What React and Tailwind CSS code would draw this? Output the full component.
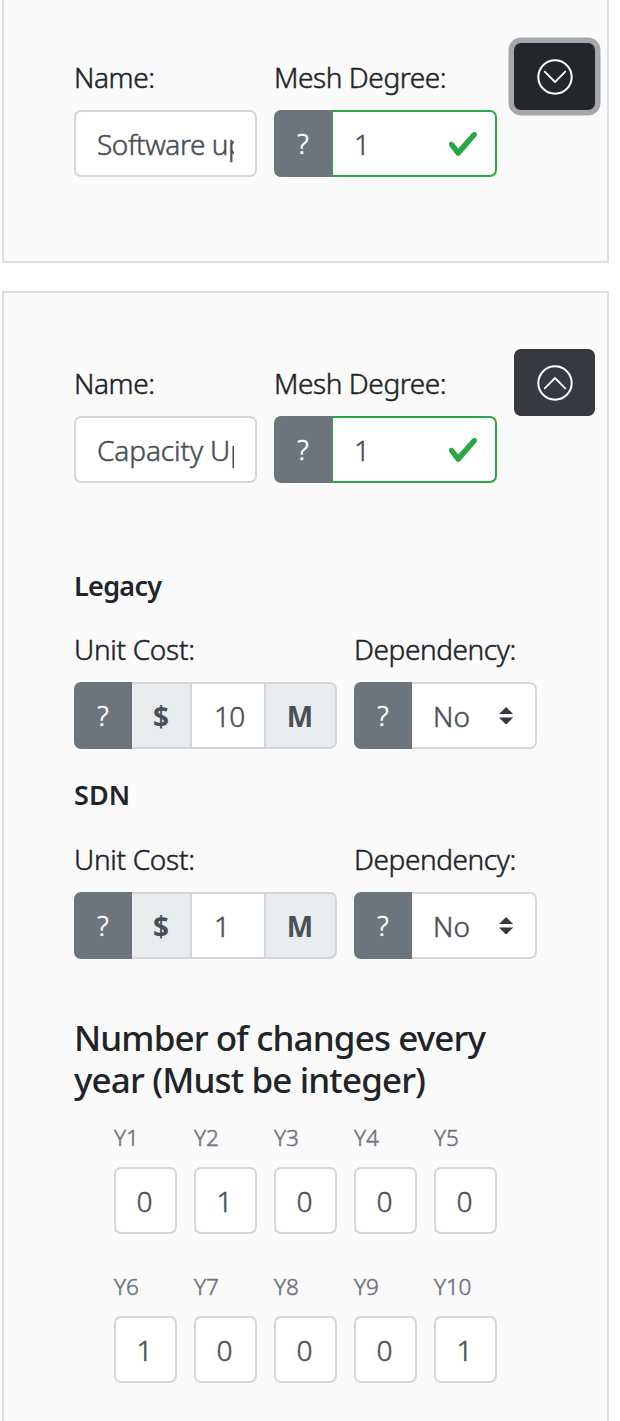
import React from "react";

function CircleChevron({ up }) {
  return (
    <svg width="36" height="36" viewBox="0 0 36 36" fill="none" stroke="#fff" strokeLinejoin="round" strokeLinecap="round" className="block shrink-0">
      <circle cx="18" cy="18" r="16.7" strokeWidth="2" />
      <path d={up ? "M7.7 23.4 18 13 28.3 23.4" : "M7.7 12.6 18 23 28.3 12.6"} strokeWidth="1.8" />
    </svg>
  );
}

function Toggle({ up, focused }) {
  return (
    <button
      className={
        "flex h-[67px] w-[81px] shrink-0 items-center justify-center rounded-[7px] pt-px " +
        (up ? "bg-[#343a40]" : "bg-[#23272b]") +
        (focused ? " shadow-[0_0_0_5.5px_#a5a8ab]" : "")
      }
    >
      <CircleChevron up={up} />
    </button>
  );
}

function Label({ children, className = "" }) {
  return <div className={"h-[42px] whitespace-nowrap text-[28px] leading-[42px] text-[#212529] " + className}>{children}</div>;
}

function Help() {
  return (
    <div className="flex h-[67px] w-[58px] shrink-0 items-center justify-center rounded-l-[7px] bg-[#6c757d] pt-px text-[27px] leading-[42px] text-white [-webkit-text-stroke:0.6px]">
      ?
    </div>
  );
}

function Panel({ name, nameClass, up, focused, className, children }) {
  return (
    <section className={"w-[607px] border-2 border-[#dddee0] bg-[#fafafa] " + className}>
      <div className="flex">
        <div className="w-[200px] pt-[13px]">
          <Label className="tracking-[-0.42px]">Name:</Label>
          <div className="mt-3 h-[67px] w-[183px] rounded-[7px] border-2 border-[#d2d7dc] bg-white px-[21px] pt-[11px]">
            <div className={"overflow-hidden whitespace-nowrap text-[28px] leading-[42px] text-[#495057] " + nameClass}>{name}</div>
          </div>
        </div>
        <div className="w-[240px] pt-[13px]">
          <Label className="tracking-[-0.42px]">Mesh Degree:</Label>
          <div className="mt-3 flex">
            <Help />
            <div className="flex h-[67px] w-[165px] items-center justify-between rounded-r-[7px] border-2 border-l-[1px] border-[#28a745] bg-white pr-4 pl-[21px]">
              <span className="pt-px text-[28px] leading-[42px] text-[#495057]">1</span>
              <svg width="32" height="32" viewBox="0 0 8 8" className="block">
                <path fill="#28a745" d="M2.3 6.73L.6 4.53c-.4-1.04.46-1.4 1.1-.8l1.1 1.4 3.4-3.8c.6-.63 1.6-.27 1.2.7l-4 4.6c-.43.5-.8.4-1.1.1z" />
              </svg>
            </div>
          </div>
        </div>
        <Toggle up={up} focused={focused} />
      </div>
      {children}
    </section>
  );
}

function CostRow({ cost }) {
  return (
    <div className="flex">
      <div className="w-[280px]">
        <Label className="tracking-[-0.3px]">Unit Cost:</Label>
        <div className="mt-3 flex text-[28px] leading-[42px] text-[#495057]">
          <Help />
          <div className="flex h-[67px] w-[60px] items-center justify-center border-y-2 border-r-2 border-[#d0d5da] bg-[#e9ecef] pt-px font-bold [-webkit-text-stroke:0]">$</div>
          <div className="flex h-[67px] w-[72px] items-center border-y-2 border-[#d0d5da] bg-white pt-px pl-[22px] tracking-[-0.8px]">{cost}</div>
          <div className="flex h-[67px] w-[73px] items-center justify-center rounded-r-[7px] border-2 border-[#d0d5da] bg-[#e9ecef] pt-px pr-px font-bold [-webkit-text-stroke:0]">M</div>
        </div>
      </div>
      <div>
        <Label className="tracking-[-0.42px]">Dependency:</Label>
        <div className="mt-3 flex">
          <Help />
          <div className="flex h-[67px] w-[124.5px] items-center justify-between rounded-r-[7px] border-2 border-l-0 border-[#d2d7dc] bg-white pr-[21px] pl-[21px]">
            <span className="pt-px text-[28px] leading-[42px] text-[#495057]">No</span>
            <svg width="14.2" height="17.7" viewBox="0 0 4 5" className="block">
              <path fill="#343a40" d="M2 0L0 2h4zm0 5L0 3h4z" />
            </svg>
          </div>
        </div>
      </div>
    </div>
  );
}

function Years({ start, values }) {
  return (
    <div className="flex gap-[17px] pl-10">
      {values.map((v, i) => (
        <div key={i} className="w-[63px]">
          <div className="h-[34px] whitespace-nowrap text-[22.5px] leading-[34px] tracking-[-0.2px] text-[#6c757d]">Y{start + i}</div>
          <div className="mt-[12px] flex h-[67px] items-center justify-center rounded-[7px] border-2 border-[#d2d7dc] bg-white pt-px pr-[2px] text-[28px] leading-[42px] text-[#495057]">
            {v}
          </div>
        </div>
      ))}
    </div>
  );
}

export default function App() {
  return (
    <main className="flex h-[1421px] w-[620px] flex-col gap-[28px] overflow-hidden bg-white pl-[2px] font-['Noto_Sans','Liberation_Sans',sans-serif] font-light [-webkit-text-stroke:0.5px]">
      <Panel name="Software upgrade" nameClass="tracking-[-0.45px]" focused className="h-[263px] shrink-0 border-t-0 pt-[43px] pl-[70px]" />
      <Panel name="Capacity Upgrade" nameClass="tracking-[-0.1px]" up className="h-[1200px] shrink-0 pt-[56px] pl-[70px]">
        <h5 className="mt-[82px] mb-[21px] h-[42px] text-[27px] leading-[42px] font-semibold tracking-[-0.7px] text-[#212529] [-webkit-text-stroke:0]">Legacy</h5>
        <CostRow cost="10" />
        <h5 className="mt-[25px] mb-[22px] h-[42px] text-[27px] leading-[42px] font-semibold tracking-[0.1px] text-[#212529] [-webkit-text-stroke:0]">SDN</h5>
        <CostRow cost="1" />
        <h4 className="mt-[58px] mb-[20px] w-[460px] text-[35px] leading-[42px] font-medium tracking-[-0.87px] text-[#212529] [-webkit-text-stroke:0]">
          Number of changes every<br />year (Must be integer)
        </h4>
        <Years start={1} values={[0, 1, 0, 0, 0]} />
        <div className="h-[36px]" />
        <Years start={6} values={[1, 0, 0, 0, 1]} />
      </Panel>
    </main>
  );
}
